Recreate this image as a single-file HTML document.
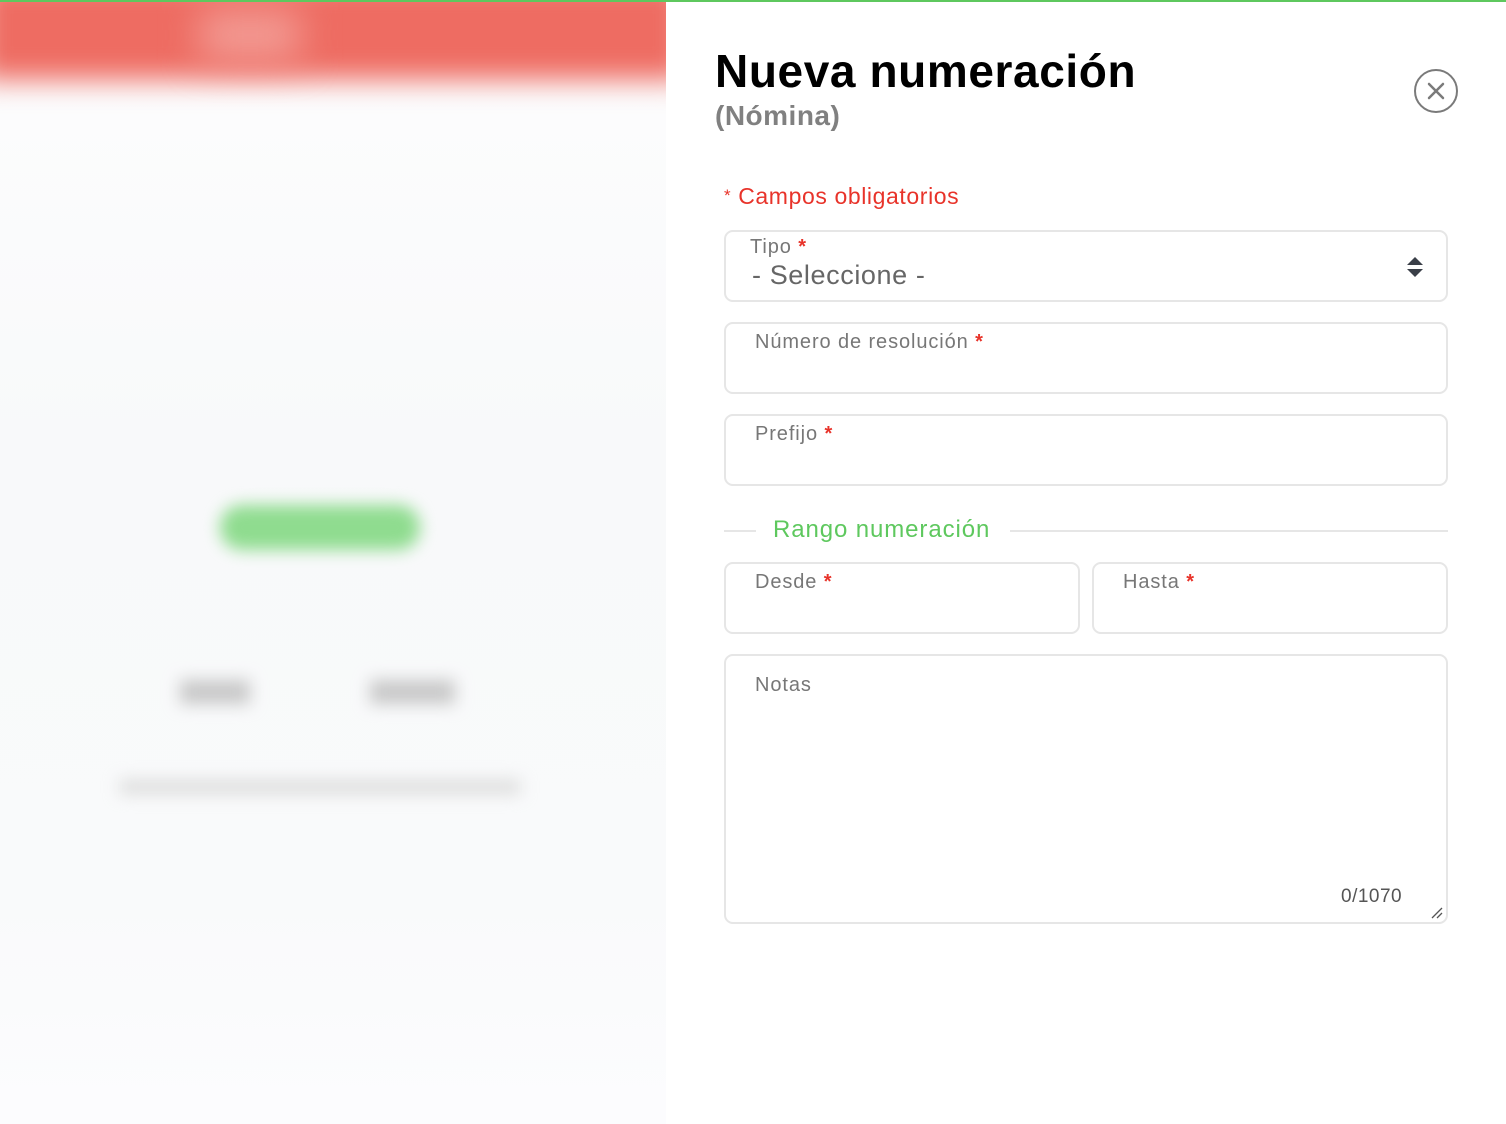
<!DOCTYPE html>
<html><head><meta charset="utf-8"><style>
*{box-sizing:border-box;margin:0;padding:0}
body{width:1506px;height:1124px;overflow:hidden;background:#fff;font-family:"Liberation Sans",sans-serif;position:relative}
.left{position:absolute;left:0;top:0;width:666px;height:1124px;background:linear-gradient(#fdfdfe,#f8f9fa 40%,#f9fafb 80%,#fcfcfe);overflow:hidden}
.left .hdr{position:absolute;left:-20px;top:-20px;width:706px;height:100px;background:#ee6c62;filter:blur(14px)}
.left .hl{position:absolute;left:200px;top:10px;width:100px;height:50px;background:#f29a93;filter:blur(18px)}
.bl{position:absolute;filter:blur(8px)}
.topline{position:absolute;left:0;top:0;width:1506px;height:2px;background:#5ec85e;z-index:5}
.panel{position:absolute;left:666px;top:0;width:840px;height:1124px;background:#fff}
h1{position:absolute;left:715px;top:44px;font-size:46px;font-weight:bold;color:#000;letter-spacing:0.6px}
.sub{position:absolute;left:715px;top:100px;font-size:28px;font-weight:bold;color:#808080;letter-spacing:0.5px}
.close{position:absolute;left:1414px;top:69px;width:44px;height:44px;border:2px solid #7a7a7a;border-radius:50%}
.req{position:absolute;left:724px;top:183px;font-size:23px;color:#e8332a;letter-spacing:0.6px}
.f{position:absolute;border:2px solid #e6e6e6;border-radius:9px;background:#fff}
.lbl{position:absolute;left:29px;top:7px;font-size:20px;color:#777;letter-spacing:0.9px}
.lbl b{color:#e8332a}
.sec{position:absolute;left:773px;top:516px;font-size:24px;color:#5ec85e;letter-spacing:0.9px}
.ln{position:absolute;height:2px;background:#e6e6e6;top:530px}
</style></head><body>
<div class="left">
 <div class="hdr"></div><div class="hl"></div>
 <div class="bl" style="left:220px;top:505px;width:200px;height:45px;background:#8fdc8f;border-radius:22px"></div>
 <div class="bl" style="left:180px;top:680px;width:70px;height:24px;background:#c8c8c8"></div>
 <div class="bl" style="left:370px;top:680px;width:85px;height:24px;background:#c8c8c8"></div>
 <div class="bl" style="left:120px;top:780px;width:400px;height:14px;background:#dcdcdc"></div>
</div>
<div class="topline"></div>
<div class="panel"></div>
<h1>Nueva numeración</h1>
<div class="sub">(Nómina)</div>
<div class="close"><svg width="40" height="40" viewBox="0 0 40 40"><path d="M13 13L27 27M27 13L13 27" stroke="#7a7a7a" stroke-width="2.5" stroke-linecap="round"/></svg></div>
<div class="req"><span style="font-size:17px;vertical-align:3px">*</span> Campos obligatorios</div>
<div class="f" style="left:724px;top:230px;width:724px;height:72px">
 <div class="lbl" style="left:24px;top:4px">Tipo <b>*</b></div>
 <div style="position:absolute;left:26px;top:28px;font-size:27px;color:#666;letter-spacing:0.6px">- Seleccione -</div>
 <svg style="position:absolute;left:680px;top:24px" width="18" height="22" viewBox="0 0 18 22"><path d="M1 9L9 1L17 9Z M1 13L9 21L17 13Z" fill="#3a3f48"/></svg>
</div>
<div class="f" style="left:724px;top:322px;width:724px;height:72px"><div class="lbl">Número de resolución <b>*</b></div></div>
<div class="f" style="left:724px;top:414px;width:724px;height:72px"><div class="lbl">Prefijo <b>*</b></div></div>
<div class="ln" style="left:724px;width:32px"></div>
<div class="sec">Rango numeración</div>
<div class="ln" style="left:1010px;width:438px"></div>
<div class="f" style="left:724px;top:562px;width:356px;height:72px"><div class="lbl">Desde <b>*</b></div></div>
<div class="f" style="left:1092px;top:562px;width:356px;height:72px"><div class="lbl">Hasta <b>*</b></div></div>
<div class="f" style="left:724px;top:654px;width:724px;height:270px">
 <div class="lbl" style="top:18px">Notas</div>
 <div style="position:absolute;left:615px;top:230px;font-size:19px;color:#555;letter-spacing:0.5px">0/1070</div>
 <svg style="position:absolute;left:704px;top:250px" width="14" height="14"><path d="M2 12L12 2M7 12L12 7" stroke="#555" stroke-width="1.3"/></svg>
</div>
</body></html>
